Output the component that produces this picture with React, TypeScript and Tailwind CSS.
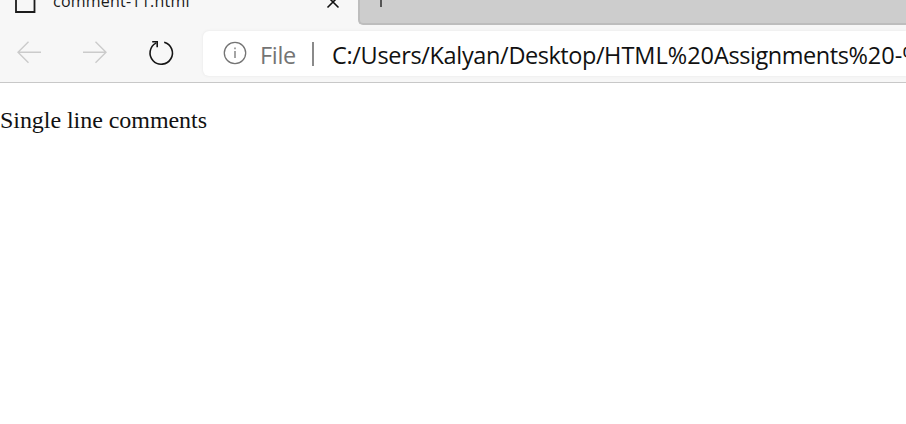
const ui = "font-['Open_Sans','Noto_Sans',sans-serif] whitespace-nowrap";

function Tabs() {
  return (
    <div className="flex h-[25px] overflow-hidden">
      <div className="flex h-full w-[358px] shrink-0 items-start bg-[#f7f7f7]">
        <svg className="ml-[15px] shrink-0" width="21" height="14" viewBox="0 0 21 14" fill="none">
          <path d="M1 -5V12H19.5V-5" stroke="#1b1b1b" strokeWidth="1.8" />
        </svg>
        <span className={`${ui} -mt-[10px] ml-[17px] w-[264px] text-[16px] leading-[22px] tracking-[0.22px] text-[#1b1b1b]`}>
          comment-11.html
        </span>
        <svg className="ml-[9px] shrink-0" width="14" height="9" viewBox="0 0 14 9" fill="none">
          <path d="M1.5 7.5L12.5 -3.5M12.5 7.5L1.5 -3.5" stroke="#111" strokeWidth="1.6" />
        </svg>
      </div>
      <div className="h-full flex-1 rounded-bl-[5px] border-b-2 border-l-2 border-[#bdbdbd] bg-[#cdcdcd] pl-[20px]">
        <div className="h-[7px] w-[2px] bg-[#555]" />
      </div>
    </div>
  );
}

function Toolbar() {
  return (
    <div className="flex h-[58px] items-start border-b border-[#c8c8c8]">
      <svg className="ml-[16px] mt-[15px] shrink-0" width="26" height="24" viewBox="0 0 26 24" fill="none" stroke="#cbcbcb" strokeWidth="1.4">
        <path d="M25 12.2H2M12.5 1.7L2 12.2L12.5 22.7" />
      </svg>
      <svg className="ml-[40px] mt-[15px] shrink-0" width="26" height="24" viewBox="0 0 26 24" fill="none" stroke="#cbcbcb" strokeWidth="1.4">
        <path d="M1 12.2H24M13.5 1.7L24 12.2L13.5 22.7" />
      </svg>
      <svg className="ml-[39px] mt-[14px] shrink-0" width="28" height="28" viewBox="0 0 28 28" fill="none" stroke="#151515" strokeWidth="1.6">
        <path d="M17.2 3.2A11.2 11.2 0 1 1 9 4.1M5.2 2.8H10.2V8.2" />
      </svg>
      <div className="ml-[28px] mt-[6px] flex h-[45px] flex-1 items-center overflow-hidden rounded-l-[6px] bg-white shadow-[0_0_3px_#e4e4e4]">
        <svg className="-mt-[2px] ml-[20px] shrink-0" width="24" height="24" viewBox="0 0 24 24" fill="none" stroke="#747474" strokeWidth="1.3">
          <circle cx="12" cy="12" r="10.7" />
          <path d="M12 10V17M12 6.5V8.2" />
        </svg>
        <span className={`${ui} mt-[2px] ml-[13px] w-[52px] shrink-0 text-[23.5px] leading-[32px] tracking-[-0.3px] text-[#747474]`}>File</span>
        <span className="h-[24px] w-[2px] shrink-0 bg-[#8a8a8a]" />
        <span className={`${ui} mt-[2px] ml-[18px] text-[23.5px] leading-[32px] text-[#111]`}>
          <span className="tracking-[-0.33px]">C:/Users/</span>
          <span className="tracking-[-0.35px]">Kalyan/</span>
          <span className="tracking-[-0.45px]">Desktop/</span>
          <span>HTML%20</span>
          <span className="tracking-[-0.45px]">Assignments</span>
          <span>%20-%20</span>
        </span>
      </div>
    </div>
  );
}

export default function App() {
  return (
    <div className="h-[424px] w-[906px] overflow-hidden bg-white">
      <div className="bg-[#f7f7f7]">
        <Tabs />
        <Toolbar />
      </div>
      <p className="mt-[23px] font-['Liberation_Serif',serif] text-[24px] leading-[28px] tracking-[-0.05px] text-[#111]">
        Single line comments
      </p>
    </div>
  );
}
